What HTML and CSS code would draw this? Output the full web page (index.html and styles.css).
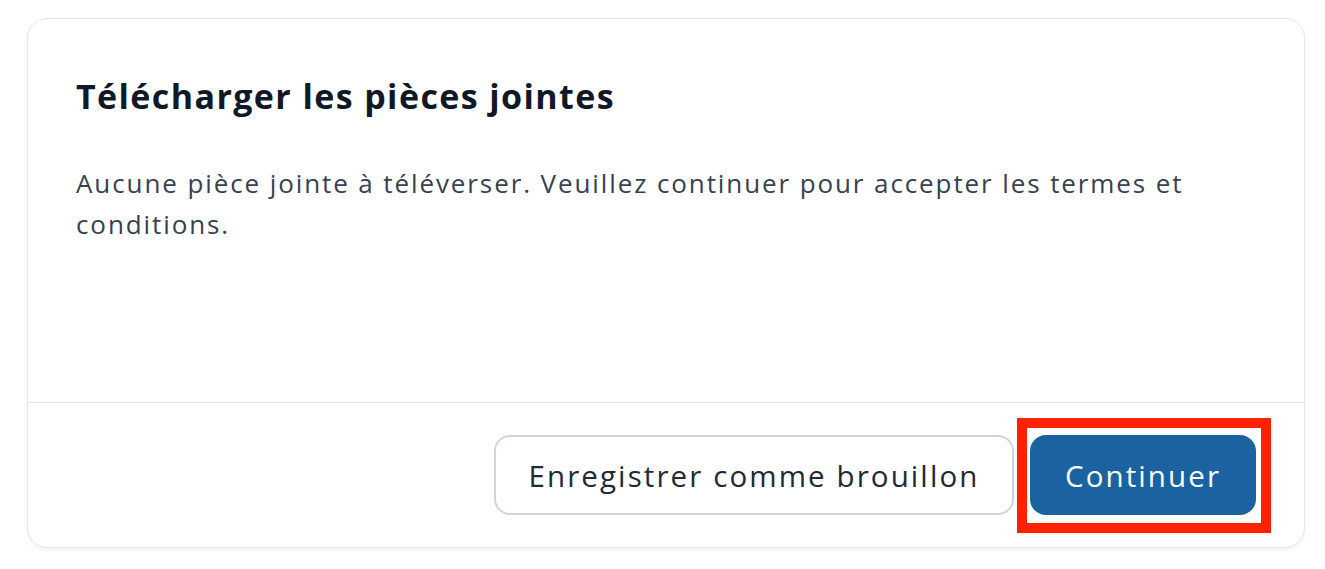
FILE: index.html
```html
<!DOCTYPE html>
<html lang="fr">
<head>
<meta charset="utf-8">
<title>Télécharger les pièces jointes</title>
<link rel="stylesheet" href="styles.css">
</head>
<body>
  <div class="page">
    <section class="card">
      <div class="card-body">
        <h2 class="card-title">Télécharger les pièces jointes</h2>
        <p class="card-text">Aucune pièce jointe à téléverser. Veuillez continuer pour accepter les termes et conditions.</p>
      </div>
      <div class="card-footer">
        <button class="btn btn-secondary" type="button">Enregistrer comme brouillon</button>
        <span class="highlight">
          <button class="btn btn-primary" type="button">Continuer</button>
        </span>
      </div>
    </section>
  </div>
</body>
</html>
```

FILE: styles.css
```css
* { box-sizing: border-box; }

html, body {
  margin: 0;
  padding: 0;
  background: #ffffff;
}

body {
  font-family: "Open Sans", "Liberation Sans", sans-serif;
  color: #374151;
}

.page {
  padding: 18px 20px 20px 27px;
}

.card {
  width: 1278px;
  height: 530px;
  display: flex;
  flex-direction: column;
  background: #ffffff;
  border: 1.5px solid #e5e7eb;
  border-radius: 20px;
  box-shadow: 0 2px 4px rgba(17, 24, 39, 0.05);
}

.card-body {
  flex: 1;
  padding: 57px 48px 0 48px;
}

.card-title {
  margin: 0;
  font-size: 34px;
  line-height: 40px;
  font-weight: 700;
  color: #111827;
  letter-spacing: 1.4px;
}

.card-text {
  margin: 47px 0 0 0;
  font-size: 26px;
  line-height: 41px;
  font-weight: 400;
  color: #374151;
  letter-spacing: 1.9px;
  max-width: 1180px;
}

.card-footer {
  display: flex;
  justify-content: flex-end;
  align-items: center;
  gap: 16px;
  height: 145px;
  padding: 0 48px 0 48px;
  border-top: 1.5px solid #e5e7eb;
}

.btn {
  font-family: "Open Sans", "Liberation Sans", sans-serif;
  font-size: 29.5px;
  height: 80px;
  border-radius: 16px;
  cursor: pointer;
  letter-spacing: 2.1px;
  padding: 0;
}

.btn-secondary {
  width: 520px;
  background: #ffffff;
  color: #1f2937;
  border: 2px solid #d1d5db;
}

.btn-primary {
  width: 226px;
  background: #1b63a0;
  color: #ffffff;
  border: none;
}

.highlight {
  position: relative;
  display: inline-flex;
}

.highlight::after {
  content: "";
  position: absolute;
  left: -13px;
  top: -17px;
  right: -15px;
  bottom: -18px;
  border: 10px solid #ff2200;
  pointer-events: none;
}
```
